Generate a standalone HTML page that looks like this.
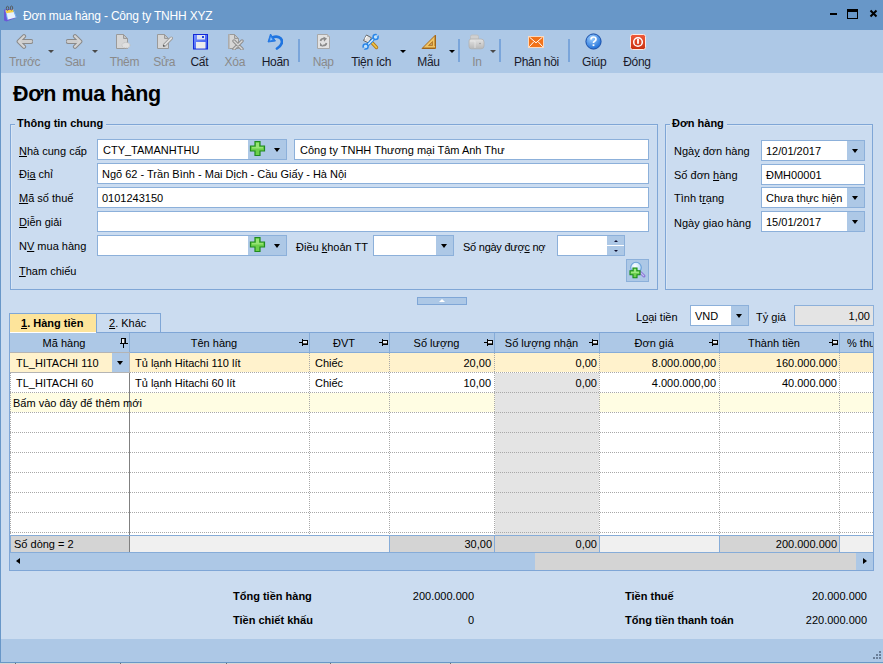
<!DOCTYPE html>
<html><head><meta charset="utf-8">
<style>
*{margin:0;padding:0;box-sizing:border-box}
html,body{width:883px;height:664px;overflow:hidden}
body{position:relative;background:#cbdcf0;font-family:"Liberation Sans",sans-serif;font-size:11px;color:#000}
.a{position:absolute}
.t{position:absolute;white-space:nowrap;line-height:13px;font-size:11px}
.tb{position:absolute;white-space:nowrap;line-height:14px;font-size:12px;color:#1a1a2a;letter-spacing:-0.3px}
.dis{color:#8a8a8a}
.u{text-decoration:underline;text-underline-offset:1px}
.inp{position:absolute;background:#fff;border:1px solid #8cb0da;height:21px}
.btn{position:absolute;background:#adc8e6}
.arr{position:absolute;width:0;height:0;border-left:3.5px solid transparent;border-right:3.5px solid transparent;border-top:4px solid #000}
.sarr{position:absolute;width:0;height:0;border-left:3px solid transparent;border-right:3px solid transparent;border-top:3.5px solid #4a4a4a}
.sep{position:absolute;top:39px;width:2px;height:23px;background:#7aa5da}
</style></head><body>
<!-- title bar -->
<div class="a" style="left:0;top:0;width:883px;height:30px;background:#6897c8"></div>
<div class="a" style="left:0;top:0;width:1px;height:664px;background:#6897c8"></div>
<div class="a" style="left:0;top:662px;width:883px;height:1px;background:#6897c8"></div>
<div class="a" style="left:0;top:663px;width:883px;height:1px;background:#d9d6d2"></div><div class="a" style="left:15px;top:663px;width:1px;height:1px;background:#707070"></div><div class="a" style="left:120px;top:663px;width:1px;height:1px;background:#707070"></div><div class="a" style="left:226px;top:663px;width:1px;height:1px;background:#707070"></div><div class="a" style="left:330px;top:663px;width:1px;height:1px;background:#707070"></div><div class="a" style="left:450px;top:663px;width:1px;height:1px;background:#707070"></div>
<svg class="a" style="left:0;top:0" width="20" height="24" viewBox="0 0 20 24">
 <path d="M4 9.5 L13.5 9 L16.5 17.5 L6.5 21.5 L4 20.5 Z" fill="#6a58d8"/>
 <path d="M5.5 10.5 L13.5 9.5 L16.5 17.2 L7.5 19.8 Z" fill="#e8f0fc"/>
 <path d="M5.5 10.5 L13.5 9.5 L14.3 12 L6.3 13.3 Z" fill="#f5cf45"/>
 <path d="M13.5 9.5 L16.5 17.2 L15.8 17.5 L13 10 Z" fill="#4aa0f0"/>
 <path d="M6.3 13.3 L7.5 19.8" stroke="#5ab0f8" stroke-width="0.8"/>
 <ellipse cx="7.5" cy="8.3" rx="1.2" ry="2" fill="none" stroke="#555" stroke-width="0.9"/>
 <ellipse cx="11.5" cy="8" rx="1.2" ry="2" fill="none" stroke="#555" stroke-width="0.9"/>
</svg>
<div class="a" style="left:23px;top:9px;font-size:12px;line-height:15px;color:#fff;white-space:nowrap;letter-spacing:-0.18px">Đơn mua hàng - Công ty TNHH XYZ</div>
<div class="a" style="left:830px;top:13px;width:7px;height:2px;background:#000"></div>
<div class="a" style="left:847px;top:9px;width:11px;height:10px;border:1px solid #000;border-top:3px solid #000"></div>
<svg class="a" style="left:869px;top:9px" width="9" height="9" viewBox="0 0 9 9"><path d="M1.5 1.5 L7.5 7.5 M7.5 1.5 L1.5 7.5" stroke="#000" stroke-width="2"/></svg>

<!-- toolbar -->
<div class="a" style="left:1px;top:30px;width:882px;height:43px;background:#adc8e6"></div>


<!-- toolbar icons -->
<svg class="a" style="left:16px;top:33px" width="17" height="17" viewBox="0 0 17 17">
 <path d="M15 8.5 L4 8.5" stroke="#8a8a8a" stroke-width="4.8" stroke-linecap="round"/>
 <path d="M8 3.2 L2.7 8.5 L8 13.8" fill="none" stroke="#8a8a8a" stroke-width="4.2" stroke-linecap="round" stroke-linejoin="round"/>
 <path d="M15 8.5 L4 8.5" stroke="#cdcdcd" stroke-width="2.8" stroke-linecap="round"/>
 <path d="M8 3.2 L2.7 8.5 L8 13.8" fill="none" stroke="#d4d4d4" stroke-width="2.2" stroke-linecap="round" stroke-linejoin="round"/>
</svg>
<svg class="a" style="left:66px;top:33px" width="17" height="17" viewBox="0 0 17 17">
 <path d="M2 8.5 L13 8.5" stroke="#8a8a8a" stroke-width="4.8" stroke-linecap="round"/>
 <path d="M9 3.2 L14.3 8.5 L9 13.8" fill="none" stroke="#8a8a8a" stroke-width="4.2" stroke-linecap="round" stroke-linejoin="round"/>
 <path d="M2 8.5 L13 8.5" stroke="#cdcdcd" stroke-width="2.8" stroke-linecap="round"/>
 <path d="M9 3.2 L14.3 8.5 L9 13.8" fill="none" stroke="#d4d4d4" stroke-width="2.2" stroke-linecap="round" stroke-linejoin="round"/>
</svg>
<svg class="a" style="left:115px;top:33px" width="17" height="17" viewBox="0 0 17 17">
 <path d="M1.5 1.5 L8.5 1.5 L12.5 5.5 L12.5 15.5 L1.5 15.5 Z" fill="#d6d6d6" stroke="#9a9a9a"/>
 <path d="M8.5 1.5 L8.5 5.5 L12.5 5.5 Z" fill="#c4c4c4" stroke="#9a9a9a"/>
 <ellipse cx="11" cy="12.2" rx="4" ry="2.8" fill="#e0e0e0" stroke="#c0c0c0" stroke-dasharray="1.2 0.8"/>
</svg>
<svg class="a" style="left:156px;top:33px" width="17" height="17" viewBox="0 0 17 17">
 <path d="M1.5 1.5 L8.5 1.5 L12.5 5.5 L12.5 15.5 L1.5 15.5 Z" fill="#d6d6d6" stroke="#9a9a9a"/>
 <path d="M8.5 1.5 L8.5 5.5 L12.5 5.5 Z" fill="#c4c4c4" stroke="#9a9a9a"/>
 <path d="M15.3 5.2 L8.6 12" stroke="#9c9c9c" stroke-width="3.4" stroke-linecap="round"/><path d="M15.3 5.2 L8.6 12" stroke="#e4e4e4" stroke-width="1.7" stroke-linecap="round"/><circle cx="7.8" cy="12.8" r="0.9" fill="#505050"/>
</svg>
<svg class="a" style="left:192px;top:33px" width="16" height="17" viewBox="0 0 16 17">
 <defs><linearGradient id="fg" x1="0" y1="0" x2="1" y2="1"><stop offset="0" stop-color="#7b95ff"/><stop offset="1" stop-color="#3050e8"/></linearGradient></defs>
 <rect x="1.5" y="1.5" width="14" height="14.5" fill="url(#fg)" stroke="#1228d8"/>
 <rect x="5" y="2" width="8" height="4.5" fill="#dfe4f2"/>
 <rect x="10" y="3" width="2" height="2" fill="#2448e0"/>
 <rect x="4" y="9" width="9.5" height="6.5" fill="#ececec"/>
</svg>
<svg class="a" style="left:227px;top:33px" width="17" height="17" viewBox="0 0 17 17">
 <path d="M1.5 1.5 L7.5 1.5 L11.5 5.5 L11.5 15.5 L1.5 15.5 Z" fill="#d6d6d6" stroke="#9a9a9a"/>
 <path d="M1.5 1.5 L3 1.5 L3 15.5 L1.5 15.5 Z" fill="#bcbcbc"/>
 <path d="M7.5 1.5 L7.5 5.5 L11.5 5.5 Z" fill="#c4c4c4" stroke="#9a9a9a"/>
 <path d="M7 8 L15 16 M15 8 L7 16" stroke="#8e8e8e" stroke-width="3.4" stroke-linecap="round"/>
 <path d="M7 8 L15 16 M15 8 L7 16" stroke="#d8d8d8" stroke-width="1.4" stroke-linecap="round"/>
</svg>
<svg class="a" style="left:266px;top:33px" width="17" height="17" viewBox="0 0 17 17">
 <path d="M6.5 4.5 C11 2.5 16 4.5 16 8.8 C16 11.5 14 13.5 11 15.5" fill="none" stroke="#1f74e0" stroke-width="2.7" stroke-linecap="round"/>
 <path d="M4.5 1 L2 9 L9.5 8 Z" fill="#2a7ee8" stroke="#1f74e0" stroke-width="0.9" stroke-linejoin="round"/>
 <path d="M4.8 4 L4 7.5 L6.5 6.8 Z" fill="#8cc4ff"/>
</svg>
<svg class="a" style="left:316px;top:33px" width="15" height="17" viewBox="0 0 15 17">
 <path d="M1.5 1.5 L11.5 1.5 L13.5 3.5 L13.5 15.5 L1.5 15.5 Z" fill="#e2e2e2" stroke="#a8a8a8"/>
 <path d="M11.5 1.5 L11.5 3.5 L13.5 3.5" fill="#c8c8c8" stroke="#b0b0b0" stroke-width="0.8"/>
 <path d="M4.5 8 Q5 5.3 8.5 5.5" fill="none" stroke="#8a8a8a" stroke-width="1.6"/>
 <path d="M7.5 3.8 L11 5.5 L8 8.8 Z" fill="#8a8a8a"/>
 <path d="M10.5 10 Q10 12.7 6.5 12.5" fill="none" stroke="#8a8a8a" stroke-width="1.6"/>
 <path d="M4 9.5 L4 13 L7.5 13.8 Z" fill="#8a8a8a"/>
</svg>
<svg class="a" style="left:362px;top:33px" width="17" height="17" viewBox="0 0 17 17">
 <path d="M7 6.5 L14.5 14.5" stroke="#b57a1a" stroke-width="3.4" stroke-linecap="round"/>
 <path d="M7 6.5 L14.5 14.5" stroke="#f2c848" stroke-width="1.6" stroke-linecap="round"/>
 <path d="M1.5 7.5 L4.5 2 L9.5 4.8 L6.5 10 Z" fill="#e0e0e0" stroke="#5a5a5a" stroke-width="0.9" stroke-linejoin="round"/>
 <path d="M3 6 L5 3" stroke="#fff" stroke-width="1.2"/>
 <path d="M4.5 13 L13 4.5" stroke="#2a86e8" stroke-width="3.2" stroke-linecap="round"/>
 <path d="M4.5 13 L13 4.5" stroke="#d8f0ff" stroke-width="1.3" stroke-linecap="round"/>
 <circle cx="13.6" cy="3.9" r="2.5" fill="#bfe4ff" stroke="#2a86e8" stroke-width="1.5"/>
 <circle cx="3.6" cy="13.6" r="2.5" fill="#bfe4ff" stroke="#2a86e8" stroke-width="1.5"/>
 <path d="M14.2 3.3 L16.5 1" stroke="#adc8e6" stroke-width="1.6"/>
 <path d="M3 14.2 L0.7 16.5" stroke="#adc8e6" stroke-width="1.6"/>
</svg>
<svg class="a" style="left:421px;top:34px" width="16" height="16" viewBox="0 0 16 16">
 <path d="M14.5 1 L14.5 14.5 L1 14.5 Z" fill="#f0c464" stroke="#a86a1c" stroke-linejoin="round"/>
 <path d="M11.5 7.5 L11.5 11.5 L7.5 11.5 Z" fill="#c89448" stroke="#a86a1c" stroke-width="0.7"/>
 <path d="M10.6 10 L10.6 10.8 L9.8 10.8 Z" fill="#adc8e6"/>
 <path d="M3 14.5 V13.2 M5 14.5 V13.2 M7 14.5 V13.2 M9 14.5 V13.2 M11 14.5 V13.2 M13 14.5 V13.2 M14.5 3 H13.2 M14.5 5 H13.2 M14.5 7 H13.2 M14.5 9 H13.2 M14.5 11 H13.2" stroke="#8a5412" stroke-width="0.9"/>
</svg>
<svg class="a" style="left:468px;top:34px" width="17" height="16" viewBox="0 0 17 16">
 <defs><linearGradient id="pg" x1="0" y1="0" x2="0" y2="1"><stop offset="0" stop-color="#e4e4e4"/><stop offset="1" stop-color="#b8b8b8"/></linearGradient></defs>
 <path d="M2.5 2.5 Q2.5 1 4 1 L9 1 Q10.5 1 10.5 2.5 L10.5 5.5 L2.5 5.5 Z" fill="#d0d0d0" stroke="#bdbdbd" stroke-width="0.8"/>
 <path d="M1 7 Q1 5 3 5 L13 5 Q16 5 16 8 L16 12 Q16 14.8 13 14.8 L3.5 14.8 Q1 14.8 1 12.5 Z" fill="url(#pg)" stroke="#b0b0b0" stroke-width="0.8"/>
 <path d="M2 7 L7 7 L7 14" fill="none" stroke="#e8e8e8" stroke-width="0.8"/>
 <circle cx="12" cy="9.5" r="0.8" fill="#999"/>
</svg>
<svg class="a" style="left:528px;top:36px" width="16" height="12" viewBox="0 0 16 12">
 <rect x="0.5" y="0.5" width="15" height="11" fill="#f27218" stroke="#fbd9bd"/>
 <path d="M1.5 1.2 L8 6.8 L14.5 1.2 M1.2 10.8 L5.8 5.8 M14.8 10.8 L10.2 5.8" fill="none" stroke="#fff" stroke-width="1"/>
</svg>
<svg class="a" style="left:585px;top:33px" width="17" height="17" viewBox="0 0 17 17">
 <defs><radialGradient id="hg" cx="0.4" cy="0.3" r="0.7"><stop offset="0" stop-color="#9fd0ff"/><stop offset="1" stop-color="#1f6fd8"/></radialGradient></defs>
 <circle cx="8.5" cy="8.5" r="7.6" fill="url(#hg)" stroke="#1a4fa8"/>
 <path d="M6 6.5 Q6 4 8.5 4 Q11 4 11 6.3 Q11 7.8 9.3 8.5 Q8.5 8.9 8.5 10" fill="none" stroke="#fff" stroke-width="1.7"/>
 <rect x="7.6" y="11.3" width="1.8" height="1.8" fill="#fff"/>
</svg>
<svg class="a" style="left:630px;top:34px" width="16" height="16" viewBox="0 0 16 16">
 <defs><linearGradient id="rg" x1="0" y1="0" x2="0" y2="1"><stop offset="0" stop-color="#f05a3a"/><stop offset="1" stop-color="#c8300f"/></linearGradient></defs>
 <rect x="0.5" y="0.5" width="15" height="15" rx="2" fill="url(#rg)" stroke="#fbe8e2"/>
 <circle cx="8" cy="8" r="4.3" fill="none" stroke="#fff" stroke-width="1.5"/>
 <rect x="7.1" y="5" width="1.8" height="4.8" fill="#fff"/>
</svg>
<!-- dropdown arrows -->
<div class="sarr" style="left:47.5px;top:50px"></div>
<div class="sarr" style="left:91.5px;top:50px"></div>
<div class="arr" style="left:399.5px;top:50px;border-left-width:3px;border-right-width:3px;border-top-width:3px"></div>
<div class="arr" style="left:449px;top:50px;border-left-width:3px;border-right-width:3px;border-top-width:3px"></div>
<div class="sarr" style="left:489.5px;top:50px"></div>
<!-- separators -->
<div class="sep" style="left:298px"></div>
<div class="sep" style="left:458px"></div>
<div class="sep" style="left:499px"></div>
<div class="sep" style="left:568px"></div>
<div class="tb dis" style="left:-15.4px;top:55px;width:80px;text-align:center">Trước</div>
<div class="tb dis" style="left:35.0px;top:55px;width:80px;text-align:center">Sau</div>
<div class="tb dis" style="left:84.4px;top:55px;width:80px;text-align:center">Thêm</div>
<div class="tb dis" style="left:124.2px;top:55px;width:80px;text-align:center">Sửa</div>
<div class="tb" style="left:159.3px;top:55px;width:80px;text-align:center">Cất</div>
<div class="tb dis" style="left:194.8px;top:55px;width:80px;text-align:center">Xóa</div>
<div class="tb" style="left:235.4px;top:55px;width:80px;text-align:center">Hoãn</div>
<div class="tb dis" style="left:283.2px;top:55px;width:80px;text-align:center">Nạp</div>
<div class="tb" style="left:331.1px;top:55px;width:80px;text-align:center">Tiện ích</div>
<div class="tb" style="left:388.5px;top:55px;width:80px;text-align:center">Mẫu</div>
<div class="tb dis" style="left:437.0px;top:55px;width:80px;text-align:center">In</div>
<div class="tb" style="left:496.5px;top:55px;width:80px;text-align:center">Phản hồi</div>
<div class="tb" style="left:554.2px;top:55px;width:80px;text-align:center">Giúp</div>
<div class="tb" style="left:597.0px;top:55px;width:80px;text-align:center">Đóng</div>
<!-- body -->
<!-- heading -->
<div class="a" style="left:13px;top:83px;font-size:21.5px;line-height:22px;font-weight:bold;letter-spacing:-0.3px;white-space:nowrap">Đơn mua hàng</div>

<!-- group 1 -->
<div class="a" style="left:10px;top:124px;width:648px;height:166px;border:1px solid #7fa6d6;box-shadow:inset 1px 1px 0 #d8e5f4"></div>
<div class="t" style="left:15px;top:117px;font-weight:bold;background:#cbdcf0;padding:0 3px 0 2px">Thông tin chung</div>
<!-- group 2 -->
<div class="a" style="left:665px;top:124px;width:208px;height:166px;border:1px solid #7fa6d6;box-shadow:inset 1px 1px 0 #d8e5f4"></div>
<div class="t" style="left:670px;top:117px;font-weight:bold;background:#cbdcf0;padding:0 3px 0 2px">Đơn hàng</div>

<!-- left group labels -->
<div class="t" style="left:19px;top:145px"><span class="u">N</span>hà cung cấp</div>
<div class="t" style="left:19px;top:168px">Đị<span class="u">a</span> chỉ</div>
<div class="t" style="left:19px;top:192px"><span class="u">M</span>ã số thuế</div>
<div class="t" style="left:19px;top:216px"><span class="u">D</span>iễn giải</div>
<div class="t" style="left:19px;top:240px">N<span class="u">V</span> mua hàng</div>
<div class="t" style="left:19px;top:265px"><span class="u">T</span>ham chiếu</div>

<!-- inputs -->
<div class="inp" style="left:97px;top:139px;width:190px"></div>
<div class="btn" style="left:248px;top:140px;width:38px;height:19px"></div>
<div class="t" style="left:103px;top:144px">CTY_TAMANHTHU</div>
<div class="inp" style="left:294px;top:139px;width:355px"></div>
<div class="t" style="left:300px;top:144px">Công ty TNHH Thương mại Tâm Anh Thư</div>
<div class="inp" style="left:97px;top:163px;width:552px"></div>
<div class="t" style="left:102px;top:168px">Ngõ 62 - Trần Bình - Mai Dịch - Cầu Giấy - Hà Nội</div>
<div class="inp" style="left:97px;top:187px;width:552px"></div>
<div class="t" style="left:102px;top:192px">0101243150</div>
<div class="inp" style="left:97px;top:211px;width:552px"></div>
<div class="inp" style="left:97px;top:235px;width:190px"></div>
<div class="btn" style="left:248px;top:236px;width:38px;height:19px"></div>

<div class="t" style="left:296px;top:241px">Điều <span class="u">k</span>hoản TT</div>
<div class="inp" style="left:373px;top:235px;width:81px"></div>
<div class="btn" style="left:436px;top:236px;width:17px;height:19px"></div>
<div class="arr" style="left:441px;top:244px"></div>
<div class="t" style="left:463px;top:241px;letter-spacing:-0.25px">Số ngày đượ<span class="u">c</span> nợ</div>
<div class="inp" style="left:557px;top:235px;width:68px"></div>
<div class="btn" style="left:607px;top:236px;width:17px;height:9px"></div>
<div class="btn" style="left:607px;top:246px;width:17px;height:9px"></div>
<div class="a" style="left:613.5px;top:240px;width:0;height:0;border-left:2.5px solid transparent;border-right:2.5px solid transparent;border-bottom:2.5px solid #101030"></div>
<div class="a" style="left:613.5px;top:249.5px;width:0;height:0;border-left:2.5px solid transparent;border-right:2.5px solid transparent;border-top:2.5px solid #101030"></div>

<!-- plus icons -->
<svg class="a" style="left:249px;top:140px" width="17" height="17" viewBox="0 0 17 17">
 <path d="M6 1.5 H11 V6 H15.5 V11 H11 V15.5 H6 V11 H1.5 V6 H6 Z" fill="#6ccf4a" stroke="#1f8a1f" stroke-width="1.2"/>
 <path d="M7 3 H10 V7 H14 V8.5 H3 V7 H7 Z" fill="#a8ec88" opacity="0.7"/>
</svg>
<div class="arr" style="left:274px;top:148px"></div>
<svg class="a" style="left:249px;top:236px" width="17" height="17" viewBox="0 0 17 17">
 <path d="M6 1.5 H11 V6 H15.5 V11 H11 V15.5 H6 V11 H1.5 V6 H6 Z" fill="#6ccf4a" stroke="#1f8a1f" stroke-width="1.2"/>
 <path d="M7 3 H10 V7 H14 V8.5 H3 V7 H7 Z" fill="#a8ec88" opacity="0.7"/>
</svg>
<div class="arr" style="left:274px;top:244px"></div>

<!-- lookup button -->
<div class="a" style="left:626px;top:259px;width:23px;height:23px;background:#adc8e6;border:1px solid #8cb0da"></div>
<svg class="a" style="left:626px;top:259px" width="23" height="23" viewBox="0 0 23 23">
 <defs><radialGradient id="lg" cx="0.4" cy="0.35" r="0.7"><stop offset="0" stop-color="#ffffff"/><stop offset="1" stop-color="#a8d4f8"/></radialGradient></defs>
 <path d="M14.5 13.5 L18 17" stroke="#8a78d8" stroke-width="3" stroke-linecap="round"/>
 <path d="M14.8 13.8 L17.6 16.6" stroke="#c8c0f4" stroke-width="1.2" stroke-linecap="round"/>
 <circle cx="10" cy="8.6" r="5.3" fill="url(#lg)" stroke="#6aa0d8" stroke-width="1.1"/>
 <path d="M7 9 H11 V11.8 H14 V15.8 H11 V18.8 H7 V15.8 H4 V11.8 H7 Z" fill="#70d050" stroke="#178a17" stroke-width="1.1"/>
 <path d="M8 10 H10 V12.8 H13 V14 H5 V12.8 H8 Z" fill="#a8ec90" opacity="0.8"/>
</svg>

<!-- right group -->
<div class="t" style="left:674px;top:145px">Ngà<span class="u">y</span> đơn hàng</div>
<div class="t" style="left:674px;top:169px">Số đơn <span class="u">h</span>àng</div>
<div class="t" style="left:674px;top:192px">Tình t<span class="u">r</span>ạng</div>
<div class="t" style="left:674px;top:217px">N<span class="u">g</span>ày giao hàng</div>
<div class="inp" style="left:761px;top:140px;width:104px"></div>
<div class="btn" style="left:847px;top:141px;width:17px;height:19px"></div>
<div class="arr" style="left:852px;top:149px"></div>
<div class="t" style="left:766px;top:145px">12/01/2017</div>
<div class="inp" style="left:761px;top:164px;width:104px"></div>
<div class="t" style="left:766px;top:169px">ĐMH00001</div>
<div class="inp" style="left:761px;top:187px;width:104px"></div>
<div class="btn" style="left:847px;top:188px;width:17px;height:19px"></div>
<div class="arr" style="left:852px;top:196px"></div>
<div class="t" style="left:766px;top:192px">Chưa thực hiện</div>
<div class="inp" style="left:761px;top:211px;width:104px"></div>
<div class="btn" style="left:847px;top:212px;width:17px;height:19px"></div>
<div class="arr" style="left:852px;top:220px"></div>
<div class="t" style="left:766px;top:216px">15/01/2017</div>

<!-- splitter -->
<div class="a" style="left:417px;top:297px;width:50px;height:8px;background:#adc8e6;border:1px solid #7fa6d6"></div>
<div class="a" style="left:439px;top:299px;width:0;height:0;border-left:3px solid transparent;border-right:3px solid transparent;border-bottom:3px solid #fff"></div>


<!-- table -->
<div class="a" style="left:9px;top:313px;width:88px;height:20px;background:#fde49b;border:1px solid #7fa6d6;border-bottom:none;border-right:none"></div>
<div class="a" style="left:96px;top:313px;width:65px;height:20px;background:#cbdcf0;border:1px solid #7fa6d6"></div>
<div class="t" style="left:21px;top:317px;font-weight:bold"><span class="u">1</span>. Hàng tiền</div>
<div class="t" style="left:109px;top:317px"><span class="u">2</span>. Khác</div>
<div class="a" style="left:9px;top:332px;width:865px;height:239px;border:1px solid #7fa6d6;border-top:none;background:#fff"></div>
<div class="a" style="left:96px;top:332px;width:778px;height:1px;background:#7fa6d6"></div>
<div class="a" style="left:10px;top:333px;width:863px;height:19px;background:#adc8e6"></div>
<div class="a" style="left:10px;top:352px;width:863px;height:1px;background:#86acd8"></div>
<div class="a" style="left:129px;top:333px;width:1px;height:19px;background:#86acd8"></div>
<div class="a" style="left:309px;top:333px;width:1px;height:19px;background:#86acd8"></div>
<div class="a" style="left:389px;top:333px;width:1px;height:19px;background:#86acd8"></div>
<div class="a" style="left:494px;top:333px;width:1px;height:19px;background:#86acd8"></div>
<div class="a" style="left:599px;top:333px;width:1px;height:19px;background:#86acd8"></div>
<div class="a" style="left:719px;top:333px;width:1px;height:19px;background:#86acd8"></div>
<div class="a" style="left:839px;top:333px;width:1px;height:19px;background:#86acd8"></div>
<div class="a" style="left:10px;top:353px;width:863px;height:19px;background:#fff2cc"></div>
<div class="a" style="left:10px;top:373px;width:863px;height:19px;background:#fff"></div>
<div class="a" style="left:495px;top:373px;width:104px;height:20px;background:#e4e4e4"></div>
<div class="a" style="left:10px;top:393px;width:863px;height:19px;background:#fffde3"></div>
<div class="a" style="left:495px;top:393px;width:104px;height:20px;background:#e4e4e4"></div>
<div class="a" style="left:10px;top:413px;width:863px;height:19px;background:#fff"></div>
<div class="a" style="left:495px;top:413px;width:104px;height:20px;background:#e4e4e4"></div>
<div class="a" style="left:10px;top:433px;width:863px;height:19px;background:#fff"></div>
<div class="a" style="left:495px;top:433px;width:104px;height:20px;background:#e4e4e4"></div>
<div class="a" style="left:10px;top:453px;width:863px;height:19px;background:#fff"></div>
<div class="a" style="left:495px;top:453px;width:104px;height:20px;background:#e4e4e4"></div>
<div class="a" style="left:10px;top:473px;width:863px;height:19px;background:#fff"></div>
<div class="a" style="left:495px;top:473px;width:104px;height:20px;background:#e4e4e4"></div>
<div class="a" style="left:10px;top:493px;width:863px;height:19px;background:#fff"></div>
<div class="a" style="left:495px;top:493px;width:104px;height:20px;background:#e4e4e4"></div>
<div class="a" style="left:10px;top:513px;width:863px;height:22px;background:#fff"></div>
<div class="a" style="left:495px;top:513px;width:104px;height:23px;background:#e4e4e4"></div>
<div class="a" style="left:10px;top:372px;width:863px;height:1px;background:repeating-linear-gradient(to right,#a8a8a8 0 1px,transparent 1px 2px)"></div>
<div class="a" style="left:10px;top:392px;width:863px;height:1px;background:repeating-linear-gradient(to right,#a8a8a8 0 1px,transparent 1px 2px)"></div>
<div class="a" style="left:10px;top:412px;width:863px;height:1px;background:repeating-linear-gradient(to right,#a8a8a8 0 1px,transparent 1px 2px)"></div>
<div class="a" style="left:10px;top:432px;width:863px;height:1px;background:repeating-linear-gradient(to right,#a8a8a8 0 1px,transparent 1px 2px)"></div>
<div class="a" style="left:10px;top:452px;width:863px;height:1px;background:repeating-linear-gradient(to right,#a8a8a8 0 1px,transparent 1px 2px)"></div>
<div class="a" style="left:10px;top:472px;width:863px;height:1px;background:repeating-linear-gradient(to right,#a8a8a8 0 1px,transparent 1px 2px)"></div>
<div class="a" style="left:10px;top:492px;width:863px;height:1px;background:repeating-linear-gradient(to right,#a8a8a8 0 1px,transparent 1px 2px)"></div>
<div class="a" style="left:10px;top:512px;width:863px;height:1px;background:repeating-linear-gradient(to right,#a8a8a8 0 1px,transparent 1px 2px)"></div>
<div class="a" style="left:10px;top:532px;width:863px;height:1px;background:repeating-linear-gradient(to right,#a8a8a8 0 1px,transparent 1px 2px)"></div>
<div class="a" style="left:129px;top:353px;width:1px;height:182px;background:#808080"></div>
<div class="a" style="left:309px;top:353px;width:1px;height:182px;background:repeating-linear-gradient(to bottom,#a8a8a8 0 1px,transparent 1px 2px)"></div>
<div class="a" style="left:389px;top:353px;width:1px;height:182px;background:repeating-linear-gradient(to bottom,#a8a8a8 0 1px,transparent 1px 2px)"></div>
<div class="a" style="left:494px;top:353px;width:1px;height:182px;background:repeating-linear-gradient(to bottom,#a8a8a8 0 1px,transparent 1px 2px)"></div>
<div class="a" style="left:599px;top:353px;width:1px;height:182px;background:repeating-linear-gradient(to bottom,#a8a8a8 0 1px,transparent 1px 2px)"></div>
<div class="a" style="left:719px;top:353px;width:1px;height:182px;background:repeating-linear-gradient(to bottom,#a8a8a8 0 1px,transparent 1px 2px)"></div>
<div class="a" style="left:839px;top:353px;width:1px;height:182px;background:repeating-linear-gradient(to bottom,#a8a8a8 0 1px,transparent 1px 2px)"></div>
<div class="a" style="left:10px;top:373px;width:1px;height:162px;background:repeating-linear-gradient(to bottom,#a8a8a8 0 1px,transparent 1px 2px)"></div>
<div class="a" style="left:10px;top:352px;width:120px;height:21px;border:1px solid #b4b4b4;border-left:none"></div>
<div class="a" style="left:112px;top:353px;width:17px;height:19px;background:#adc8e6"></div>
<div class="arr" style="left:117px;top:361px"></div>
<div class="t" style="left:10px;top:337px;width:108px;text-align:center;color:#000">Mã hàng</div>
<svg class="a" style="left:120px;top:338px" width="8" height="10" viewBox="0 0 8 10" shape-rendering="crispEdges"><rect x="1" y="0" width="5" height="5" fill="#000"/><rect x="2" y="1" width="3" height="4" fill="#e8eef6"/><rect x="4" y="1" width="1" height="4" fill="#555"/><rect x="0" y="5" width="8" height="1" fill="#000"/><rect x="3" y="6" width="1" height="4" fill="#000"/></svg>
<div class="t" style="left:130px;top:337px;width:168px;text-align:center;color:#000">Tên hàng</div>
<svg class="a" style="left:299px;top:339px" width="9" height="7" viewBox="0 0 9 7" shape-rendering="crispEdges"><rect x="0" y="3" width="3" height="1" fill="#000"/><rect x="3" y="0" width="1" height="7" fill="#000"/><rect x="4" y="1" width="5" height="5" fill="#000"/><rect x="4" y="2" width="4" height="3" fill="#e8eef6"/><rect x="4" y="4" width="4" height="1" fill="#555"/></svg>
<div class="t" style="left:310px;top:337px;width:68px;text-align:center;color:#000">ĐVT</div>
<svg class="a" style="left:379px;top:339px" width="9" height="7" viewBox="0 0 9 7" shape-rendering="crispEdges"><rect x="0" y="3" width="3" height="1" fill="#000"/><rect x="3" y="0" width="1" height="7" fill="#000"/><rect x="4" y="1" width="5" height="5" fill="#000"/><rect x="4" y="2" width="4" height="3" fill="#e8eef6"/><rect x="4" y="4" width="4" height="1" fill="#555"/></svg>
<div class="t" style="left:390px;top:337px;width:93px;text-align:center;color:#000">Số lượng</div>
<svg class="a" style="left:484px;top:339px" width="9" height="7" viewBox="0 0 9 7" shape-rendering="crispEdges"><rect x="0" y="3" width="3" height="1" fill="#000"/><rect x="3" y="0" width="1" height="7" fill="#000"/><rect x="4" y="1" width="5" height="5" fill="#000"/><rect x="4" y="2" width="4" height="3" fill="#e8eef6"/><rect x="4" y="4" width="4" height="1" fill="#555"/></svg>
<div class="t" style="left:495px;top:337px;width:93px;text-align:center;color:#000">Số lượng nhận</div>
<svg class="a" style="left:589px;top:339px" width="9" height="7" viewBox="0 0 9 7" shape-rendering="crispEdges"><rect x="0" y="3" width="3" height="1" fill="#000"/><rect x="3" y="0" width="1" height="7" fill="#000"/><rect x="4" y="1" width="5" height="5" fill="#000"/><rect x="4" y="2" width="4" height="3" fill="#e8eef6"/><rect x="4" y="4" width="4" height="1" fill="#555"/></svg>
<div class="t" style="left:600px;top:337px;width:108px;text-align:center;color:#000">Đơn giá</div>
<svg class="a" style="left:709px;top:339px" width="9" height="7" viewBox="0 0 9 7" shape-rendering="crispEdges"><rect x="0" y="3" width="3" height="1" fill="#000"/><rect x="3" y="0" width="1" height="7" fill="#000"/><rect x="4" y="1" width="5" height="5" fill="#000"/><rect x="4" y="2" width="4" height="3" fill="#e8eef6"/><rect x="4" y="4" width="4" height="1" fill="#555"/></svg>
<div class="t" style="left:720px;top:337px;width:108px;text-align:center;color:#000">Thành tiền</div>
<svg class="a" style="left:829px;top:339px" width="9" height="7" viewBox="0 0 9 7" shape-rendering="crispEdges"><rect x="0" y="3" width="3" height="1" fill="#000"/><rect x="3" y="0" width="1" height="7" fill="#000"/><rect x="4" y="1" width="5" height="5" fill="#000"/><rect x="4" y="2" width="4" height="3" fill="#e8eef6"/><rect x="4" y="4" width="4" height="1" fill="#555"/></svg>
<div class="t" style="left:847px;top:337px;width:26px;overflow:hidden;color:#000">% thu</div>
<div class="t" style="left:16px;top:357px">TL_HITACHI 110</div>
<div class="t" style="left:135px;top:357px">Tủ lạnh Hitachi 110 lít</div>
<div class="t" style="left:315px;top:357px">Chiếc</div>
<div class="t" style="left:341px;top:357px;width:150px;text-align:right">20,00</div>
<div class="t" style="left:447px;top:357px;width:150px;text-align:right">0,00</div>
<div class="t" style="left:566px;top:357px;width:150px;text-align:right">8.000.000,00</div>
<div class="t" style="left:687px;top:357px;width:150px;text-align:right">160.000.000</div>
<div class="t" style="left:16px;top:377px">TL_HITACHI 60</div>
<div class="t" style="left:135px;top:377px">Tủ lạnh Hitachi 60 lít</div>
<div class="t" style="left:315px;top:377px">Chiếc</div>
<div class="t" style="left:341px;top:377px;width:150px;text-align:right">10,00</div>
<div class="t" style="left:447px;top:377px;width:150px;text-align:right">0,00</div>
<div class="t" style="left:566px;top:377px;width:150px;text-align:right">4.000.000,00</div>
<div class="t" style="left:687px;top:377px;width:150px;text-align:right">40.000.000</div>
<div class="t" style="left:13px;top:397px">Bấm vào đây để thêm mới</div>
<div class="a" style="left:10px;top:535px;width:863px;height:1px;background:#86acd8"></div>
<div class="a" style="left:10px;top:536px;width:863px;height:16px;background:#f0f0f0"></div>
<div class="a" style="left:10px;top:536px;width:119px;height:16px;background:#d4d4d4"></div>
<div class="a" style="left:390px;top:536px;width:104px;height:16px;background:#d4d4d4"></div>
<div class="a" style="left:495px;top:536px;width:104px;height:16px;background:#d4d4d4"></div>
<div class="a" style="left:720px;top:536px;width:119px;height:16px;background:#d4d4d4"></div>
<div class="a" style="left:10px;top:536px;width:1px;height:16px;background:#86acd8"></div>
<div class="a" style="left:129px;top:536px;width:1px;height:16px;background:#808080"></div>
<div class="a" style="left:389px;top:536px;width:1px;height:16px;background:#86acd8"></div>
<div class="a" style="left:494px;top:536px;width:1px;height:16px;background:#86acd8"></div>
<div class="a" style="left:599px;top:536px;width:1px;height:16px;background:#86acd8"></div>
<div class="a" style="left:719px;top:536px;width:1px;height:16px;background:#86acd8"></div>
<div class="a" style="left:839px;top:536px;width:1px;height:16px;background:#86acd8"></div>
<div class="a" style="left:10px;top:552px;width:863px;height:1px;background:#86acd8"></div>
<div class="t" style="left:14px;top:538px">Số dòng = 2</div>
<div class="t" style="left:342px;top:538px;width:150px;text-align:right">30,00</div>
<div class="t" style="left:447px;top:538px;width:150px;text-align:right">0,00</div>
<div class="t" style="left:687px;top:538px;width:150px;text-align:right">200.000.000</div>
<div class="a" style="left:10px;top:553px;width:863px;height:17px;background:#adc8e6"></div>
<div class="a" style="left:535px;top:553px;width:321px;height:17px;background:#d4d4d4"></div>
<div class="a" style="left:16px;top:558px;width:0;height:0;border-top:3.5px solid transparent;border-bottom:3.5px solid transparent;border-right:4px solid #000"></div>
<div class="a" style="left:863px;top:558px;width:0;height:0;border-top:3.5px solid transparent;border-bottom:3.5px solid transparent;border-left:4px solid #000"></div>
<div class="t" style="left:636px;top:311px">L<span class="u">o</span>ại tiền</div>
<div class="inp" style="left:690px;top:305px;width:59px"></div>
<div class="btn" style="left:731px;top:306px;width:17px;height:19px"></div>
<div class="arr" style="left:736px;top:314px"></div>
<div class="t" style="left:695px;top:310px">VND</div>
<div class="t" style="left:756px;top:311px">Tỷ <span class="u">g</span>iá</div>
<div class="inp" style="left:794px;top:305px;width:80px;background:#e4e4e4"></div>
<div class="t" style="left:720px;top:310px;width:150px;text-align:right">1,00</div>
<div class="t" style="left:233px;top:590px;font-weight:bold">Tổng tiền hàng</div>
<div class="t" style="left:324px;top:590px;width:150px;text-align:right">200.000.000</div>
<div class="t" style="left:233px;top:614px;font-weight:bold">Tiền chiết khấu</div>
<div class="t" style="left:324px;top:614px;width:150px;text-align:right">0</div>
<div class="t" style="left:625px;top:590px;font-weight:bold">Tiền thuế</div>
<div class="t" style="left:717px;top:590px;width:150px;text-align:right">20.000.000</div>
<div class="t" style="left:625px;top:614px;font-weight:bold">Tổng tiền thanh toán</div>
<div class="t" style="left:717px;top:614px;width:150px;text-align:right">220.000.000</div>
<div class="a" style="left:1px;top:639px;width:882px;height:23px;background:#adc8e6"></div>
<svg class="a" style="left:870px;top:650px" width="12" height="12" viewBox="0 0 12 12"><g fill="#6a7f99"><rect x="9" y="1" width="2" height="2"/><rect x="6" y="4" width="2" height="2"/><rect x="9" y="4" width="2" height="2"/><rect x="3" y="7" width="2" height="2"/><rect x="6" y="7" width="2" height="2"/><rect x="9" y="7" width="2" height="2"/></g></svg>
<!-- /table -->
</body></html>
